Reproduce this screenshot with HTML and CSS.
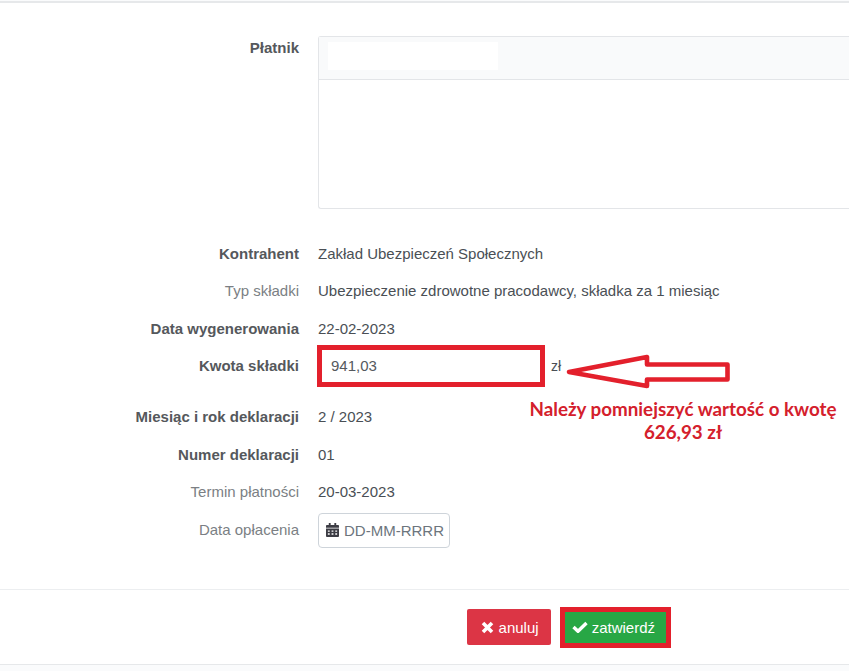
FILE: index.html
```html
<!DOCTYPE html>
<html lang="pl">
<head>
<meta charset="utf-8">
<title>Składka</title>
<link rel="stylesheet" href="styles.css">
</head>
<body>
<main class="panel">
  <form class="form">
    <div class="row row-payer">
      <div class="label strong">Płatnik</div>
      <div class="payer">
        <div class="payer-head"><div class="payer-tab"></div></div>
      </div>
    </div>
    <div class="row"><div class="label strong">Kontrahent</div><div class="value">Zakład Ubezpieczeń Społecznych</div></div>
    <div class="row"><div class="label">Typ składki</div><div class="value">Ubezpieczenie zdrowotne pracodawcy, składka za 1 miesiąc</div></div>
    <div class="row"><div class="label strong">Data wygenerowania</div><div class="value">22-02-2023</div></div>
    <div class="row row-amount">
      <div class="label strong">Kwota składki</div>
      <div class="amount-box">941,03</div>
      <div class="unit">zł</div>
    </div>
    <div class="row"><div class="label strong">Miesiąc i rok deklaracji</div><div class="value">2 / 2023</div></div>
    <div class="row"><div class="label strong">Numer deklaracji</div><div class="value">01</div></div>
    <div class="row"><div class="label">Termin płatności</div><div class="value">20-03-2023</div></div>
    <div class="row"><div class="label">Data opłacenia</div>
      <div class="date">
        <svg class="cal" viewBox="0 0 14 15" aria-hidden="true"><path fill="#3c3c44" d="M3 0h2v2h4V0h2v2h2a1 1 0 0 1 1 1v2H0V3a1 1 0 0 1 1-1h2zM0 6h14v8a1 1 0 0 1-1 1H1a1 1 0 0 1-1-1zm2 2v1.5h2V8zm4 0v1.5h2V8zm4 0v1.5h2V8zm-8 3v1.5h2V11zm4 0v1.5h2V11zm4 0v1.5h2V11z"/></svg>
        <span class="placeholder">DD-MM-RRRR</span>
      </div>
    </div>
  </form>
  <footer class="footer">
    <button type="button" class="btn btn-cancel"><svg class="ico" viewBox="0 0 13 13" aria-hidden="true"><path d="M2 2l9 9M11 2l-9 9" stroke="#fff" stroke-width="3.6" fill="none"/></svg>anuluj</button>
    <div class="btn-mark"><button type="button" class="btn btn-ok"><svg class="ico-ok" viewBox="0 0 16 12" aria-hidden="true"><path d="M1.5 6l4.5 4.3L14.5 2" stroke="#fff" stroke-width="3.4" fill="none"/></svg>zatwierdź</button></div>
  </footer>
</main>
<svg class="arrow" viewBox="0 0 170 40" aria-hidden="true"><path d="M5 19L83 4V11.5H163.5V26.5H83V33Z" fill="#fff" stroke="#e3202c" stroke-width="4.6" stroke-linejoin="round"/></svg>
<div class="note">Należy pomniejszyć wartość o kwotę<br>626,93 zł</div>
</body>
</html>
```
FILE: styles.css
```css
* { box-sizing: border-box; }
html, body { margin: 0; height: 671px; overflow: hidden; background: #fafbfc; }
body {
  position: relative;
  font-family: "Liberation Sans", Arial, sans-serif;
  font-size: 15px;
  color: #4a4f55;
}
.panel {
  height: 664px;
  margin-top: 1px;
  background: #fff;
  border-top: 2px solid #e6e8ea;
  border-bottom: 1px solid #e6e8ea;
  display: flex;
  flex-direction: column;
}
.form { flex: 1; padding-top: 33px; }
.row {
  display: flex;
  align-items: center;
  height: 37.5px;
  gap: 19px;
}
.row-payer { align-items: flex-start; height: 198.65px; }
.row-payer .label { padding-top: 3px; }
.row-amount { margin-bottom: 13.5px; }
.label {
  width: 299px;
  flex: none;
  text-align: right;
  color: #7b7f84;
}
.label.strong { font-weight: 700; color: #55585c; }
.value { color: #4a4f55; }
.payer {
  flex: 1;
  height: 173px;
  border: 1px solid #e3e5e8;
  border-right: 0;
  border-radius: 3px 0 0 3px;
}
.payer-head {
  height: 43px;
  padding: 5px 9px;
  background: #f9fafb;
  border-bottom: 1px solid #e3e5e8;
}
.payer-tab { width: 170px; height: 28px; background: #fff; }
.amount-box {
  width: 228px;
  height: 42px;
  margin-left: -1px;
  padding-left: 9px;
  display: flex;
  align-items: center;
  border: 5px solid #e3202c;
  color: #55595e;
}
.unit { margin-left: -13px; font-size: 14px; }
.date {
  display: flex;
  align-items: center;
  gap: 5px;
  width: 132px;
  height: 35px;
  margin-top: 2px;
  padding-left: 7px;
  border: 1px solid #ced4da;
  border-radius: 4px;
}
.cal { width: 13px; height: 14px; flex: none; }
.placeholder { color: #6c757d; white-space: nowrap; }
.footer {
  height: 75px;
  border-top: 1px solid #eceef0;
  display: flex;
  align-items: center;
  justify-content: flex-end;
  gap: 9px;
  padding: 0 178px 0 0;
}
.btn {
  display: flex;
  align-items: center;
  gap: 5px;
  height: 36px;
  padding: 0 12px 0 14px;
  border: 0;
  border-radius: 2px;
  color: #fff;
  font: 15px "Liberation Sans", Arial, sans-serif;
}
.btn-cancel { background: #dc3545; }
.btn-ok { background: #28a745; border-radius: 0; height: 31px; padding: 0 11px 0 7px; gap: 4px; }
.btn-mark { border: 5px solid #e3202c; }
.ico { width: 13px; height: 13px; }
.ico-ok { width: 16px; height: 12px; }
.arrow { position: absolute; left: 564px; top: 353px; width: 170px; height: 40px; }
.note {
  position: absolute;
  left: 500px;
  top: 397px;
  width: 366px;
  text-align: center;
  font: 700 18.8px/23px Lato, sans-serif;
  color: #d4202c;
}
```
